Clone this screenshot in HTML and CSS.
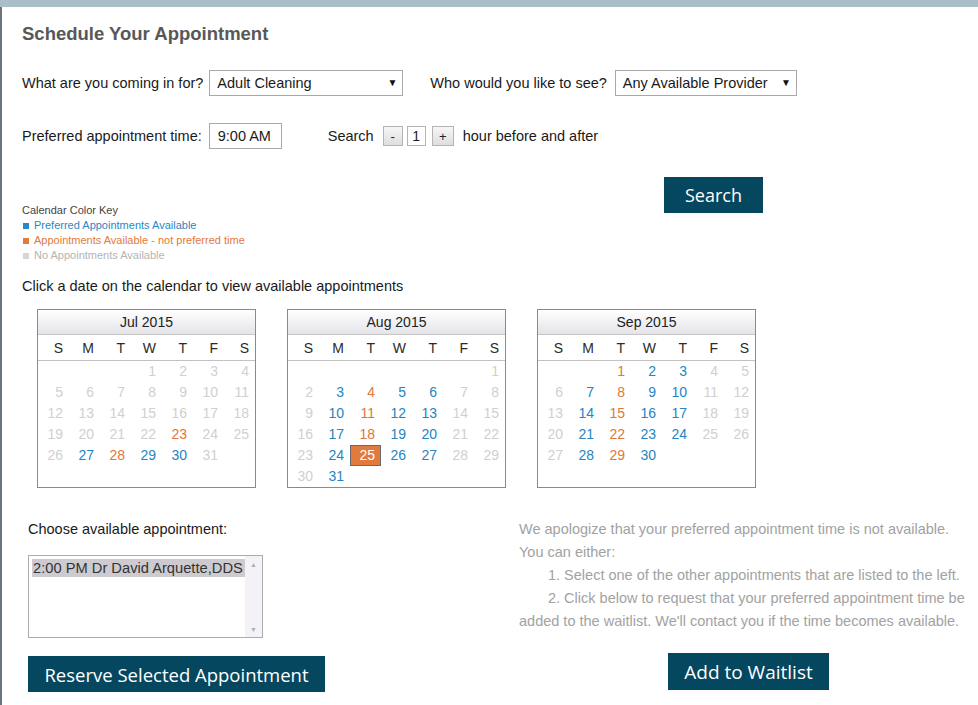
FILE: index.html
```html
<!DOCTYPE html>
<html lang="en">
<head>
<meta charset="utf-8">
<title>Schedule Your Appointment</title>
<link rel="stylesheet" href="styles.css">
</head>
<body>
<div class="topbar"></div>
<main class="page">
  <h1 class="title">Schedule Your Appointment</h1>

  <div class="row row-first">
    <span class="lbl">What are you coming in for?</span>
    <div class="select sel-reason"><span class="sel-text">Adult Cleaning</span><span class="arrow">&#9660;</span></div>
    <span class="lbl lbl-who">Who would you like to see?</span>
    <div class="select sel-provider"><span class="sel-text">Any Available Provider</span><span class="arrow">&#9660;</span></div>
  </div>

  <div class="row row-second">
    <span class="lbl">Preferred appointment time:</span>
    <div class="textbox">9:00 AM</div>
    <span class="lbl lbl-search">Search</span>
    <span class="stepbtn">-</span>
    <span class="stepval">1</span>
    <span class="stepbtn stepbtn-plus">+</span>
    <span class="lbl lbl-hour">hour before and after</span>
  </div>

  <div class="row-third">
    <div class="key">
      <div class="key-title">Calendar Color Key</div>
      <div class="key-item key-blue"><span class="sq"></span>Preferred Appointments Available</div>
      <div class="key-item key-orange"><span class="sq"></span>Appointments Available - not preferred time</div>
      <div class="key-item key-gray"><span class="sq"></span>No Appointments Available</div>
    </div>
    <button class="btn btn-search">Search</button>
  </div>

  <p class="instr">Click a date on the calendar to view available appointments</p>

  <div class="calendars">
    <div class="cal">
      <div class="cal-head">Jul 2015</div>
      <div class="cal-dow"><span>S</span><span>M</span><span>T</span><span>W</span><span>T</span><span>F</span><span>S</span></div>
      <div class="cal-days">
        <span></span><span></span><span></span><span class="g">1</span><span class="g">2</span><span class="g">3</span><span class="g">4</span>
        <span class="g">5</span><span class="g">6</span><span class="g">7</span><span class="g">8</span><span class="g">9</span><span class="g">10</span><span class="g">11</span>
        <span class="g">12</span><span class="g">13</span><span class="g">14</span><span class="g">15</span><span class="g">16</span><span class="g">17</span><span class="g">18</span>
        <span class="g">19</span><span class="g">20</span><span class="g">21</span><span class="g">22</span><span class="o">23</span><span class="g">24</span><span class="g">25</span>
        <span class="g">26</span><span class="b">27</span><span class="o">28</span><span class="b">29</span><span class="b">30</span><span class="g">31</span><span></span>
      </div>
    </div>
    <div class="cal">
      <div class="cal-head">Aug 2015</div>
      <div class="cal-dow"><span>S</span><span>M</span><span>T</span><span>W</span><span>T</span><span>F</span><span>S</span></div>
      <div class="cal-days">
        <span></span><span></span><span></span><span></span><span></span><span></span><span class="g">1</span>
        <span class="g">2</span><span class="b">3</span><span class="o">4</span><span class="b">5</span><span class="b">6</span><span class="g">7</span><span class="g">8</span>
        <span class="g">9</span><span class="b">10</span><span class="o">11</span><span class="b">12</span><span class="b">13</span><span class="g">14</span><span class="g">15</span>
        <span class="g">16</span><span class="b">17</span><span class="o">18</span><span class="b">19</span><span class="b">20</span><span class="g">21</span><span class="g">22</span>
        <span class="g">23</span><span class="b">24</span><span class="sel">25</span><span class="b">26</span><span class="b">27</span><span class="g">28</span><span class="g">29</span>
        <span class="g">30</span><span class="b">31</span>
      </div>
    </div>
    <div class="cal">
      <div class="cal-head">Sep 2015</div>
      <div class="cal-dow"><span>S</span><span>M</span><span>T</span><span>W</span><span>T</span><span>F</span><span>S</span></div>
      <div class="cal-days">
        <span></span><span></span><span class="o">1</span><span class="b">2</span><span class="b">3</span><span class="g">4</span><span class="g">5</span>
        <span class="g">6</span><span class="b">7</span><span class="o">8</span><span class="b">9</span><span class="b">10</span><span class="g">11</span><span class="g">12</span>
        <span class="g">13</span><span class="b">14</span><span class="o">15</span><span class="b">16</span><span class="b">17</span><span class="g">18</span><span class="g">19</span>
        <span class="g">20</span><span class="b">21</span><span class="o">22</span><span class="b">23</span><span class="b">24</span><span class="g">25</span><span class="g">26</span>
        <span class="g">27</span><span class="b">28</span><span class="o">29</span><span class="b">30</span>
      </div>
    </div>
  </div>

  <div class="bottom">
    <div class="choose">
      <div class="choose-lbl">Choose available appointment:</div>
      <div class="listbox">
        <div class="list-items"><div class="opt opt-sel">2:00 PM Dr David Arquette,DDS</div></div>
        <div class="scroll"><span class="sc-up">&#9650;</span><span class="sc-down">&#9660;</span></div>
      </div>
      <button class="btn btn-reserve">Reserve Selected Appointment</button>
    </div>
    <div class="apology">
      <p class="apology-text">We apologize that your preferred appointment time is not available.<br>You can either:<br><span class="ind">1. Select one of the other appointments that are listed to the left.</span><br><span class="ind">2. Click below to request that your preferred appointment time be</span><br>added to the waitlist. We'll contact you if the time becomes available.</p>
      <div class="waitlist-wrap"><button class="btn btn-waitlist">Add to Waitlist</button></div>
    </div>
  </div>
</main>
</body>
</html>
```

FILE: styles.css
```css
* { box-sizing: border-box; }

html, body {
  margin: 0;
  padding: 0;
  background: #ffffff;
}

body {
  font-family: "Liberation Sans", Arial, sans-serif;
  color: #1a1a1a;
  width: 978px;
  height: 705px;
  overflow: hidden;
}

.topbar {
  height: 7px;
  background: #a9bec7;
}

.page {
  border-left: 2px solid #68757c;
  padding: 16px 0 0 20px;
  height: 698px;
}

.title {
  margin: 0;
  font-size: 18.5px;
  line-height: 22px;
  font-weight: bold;
  color: #585858;
}

.row {
  display: flex;
  align-items: center;
  height: 26px;
  font-size: 14.5px;
}

.row-first { margin-top: 25px; }
.row-second { margin-top: 27px; }

.lbl { white-space: nowrap; color: #1a1a1a; }

.select {
  display: flex;
  align-items: center;
  justify-content: space-between;
  height: 26px;
  border: 1px solid #a9a9a9;
  background: #fff;
  padding: 0 5px 0 7px;
  color: #1a1a1a;
}

.sel-reason { width: 194px; margin-left: 6px; }
.sel-provider { width: 182px; margin-left: 8px; }
.lbl-who { margin-left: 27px; }

.arrow {
  font-size: 10px;
  color: #111;
  line-height: 1;
}

.textbox {
  width: 73px;
  height: 26px;
  margin-left: 7px;
  border: 1px solid #a9a9a9;
  padding: 0 0 0 8px;
  line-height: 24px;
}

.lbl-search { margin-left: 46px; }

.stepbtn, .stepval {
  display: inline-flex;
  align-items: center;
  justify-content: center;
  height: 20px;
  border: 1px solid #b4b4b4;
  font-size: 13px;
}

.stepbtn {
  width: 20px;
  margin-left: 9px;
  background: linear-gradient(#f6f6f6, #dedede);
  color: #222;
}

.stepbtn-plus { width: 22px; margin-left: 6px; }

.stepval {
  width: 19px;
  margin-left: 4px;
  background: #fff;
  font-size: 14px;
}

.lbl-hour { margin-left: 9px; }

.row-third {
  margin-top: 28px;
  display: grid;
  grid-template-columns: 642px auto;
  align-items: start;
}

.key {
  padding-top: 26px;
  font-size: 11px;
  line-height: 15px;
}

.key-title { color: #444; }
.key-item { display: flex; align-items: center; }
.sq {
  display: inline-block;
  width: 6px;
  height: 6px;
  margin: 0 5px 0 1px;
}
.key-blue { color: #2a88c4; }
.key-blue .sq { background: #2a88c4; }
.key-orange { color: #e27a3b; }
.key-orange .sq { background: #e27a3b; }
.key-gray { color: #b4b4b4; }
.key-gray .sq { background: #d6d6d6; }

.btn {
  display: inline-flex;
  align-items: center;
  justify-content: center;
  border: none;
  background: #04475f;
  color: #ffffff;
  font-family: "Open Sans", "Noto Sans", sans-serif;
  font-size: 18px;
  padding: 0;
  margin: 0;
  white-space: nowrap;
}

.btn-search { width: 99px; height: 36px; }

.instr {
  margin: 14px 0 0;
  font-size: 14.5px;
  line-height: 18px;
  color: #1a1a1a;
}

.calendars {
  margin: 14px 0 0 15px;
  display: flex;
  gap: 31px;
}

.cal {
  width: 219px;
  height: 179px;
  border: 1px solid #8a8a8a;
  font-size: 14px;
  overflow: hidden;
}

.cal-head {
  height: 25px;
  border-bottom: 1px solid #c6c6c6;
  background: linear-gradient(#ffffff, #e4e3e8);
  text-align: center;
  line-height: 24px;
  color: #222;
}

.cal-dow, .cal-days {
  display: grid;
  grid-template-columns: repeat(7, 1fr);
}

.cal-dow {
  height: 26px;
  border-bottom: 1px solid #c2c2c2;
  line-height: 27px;
  color: #2a2a2a;
}

.cal-dow span, .cal-days span {
  text-align: right;
  padding-right: 6px;
}

.cal-days {
  grid-auto-rows: 21px;
  line-height: 21px;
}

.cal-days .g { color: #d0d0d0; }
.cal-days .b { color: #2585c3; }
.cal-days .o { color: #e1773a; }
.cal-days .sel {
  background: #e07b3d;
  border: 1px solid #6a6a6a;
  color: #fff;
  line-height: 19px;
  padding-right: 5px;
}

.bottom {
  margin: 30px 0 0 6px;
  display: grid;
  grid-template-columns: 491px 459px;
}

.choose-lbl {
  padding-top: 2px;
  font-size: 14.5px;
  line-height: 18px;
  color: #1a1a1a;
}

.listbox {
  margin-top: 17px;
  width: 235px;
  height: 83px;
  border: 1px solid #ababab;
  display: flex;
  background: #fff;
}

.list-items {
  flex: 1;
  padding: 3px 0 0 3px;
}

.opt {
  height: 18px;
  line-height: 18px;
  font-size: 14.7px;
  color: #333;
  white-space: nowrap;
  padding-left: 1px;
}

.opt-sel { background: #cdcbd0; }

.scroll {
  width: 17px;
  background: #f5f2f7;
  display: flex;
  flex-direction: column;
  justify-content: space-between;
  align-items: center;
  padding: 5px 0 4px;
  font-size: 7px;
  color: #b0b0b0;
}

.btn-reserve {
  margin-top: 18px;
  width: 297px;
  height: 36px;
  font-size: 18.5px;
}

.apology-text {
  margin: 0;
  font-size: 14.5px;
  line-height: 23px;
  color: #a2a2a2;
  white-space: nowrap;
}

.ind { padding-left: 29px; }

.waitlist-wrap {
  margin-top: 20px;
  display: flex;
  justify-content: center;
}

.btn-waitlist {
  width: 161px;
  height: 37px;
  font-size: 19px;
}
```
